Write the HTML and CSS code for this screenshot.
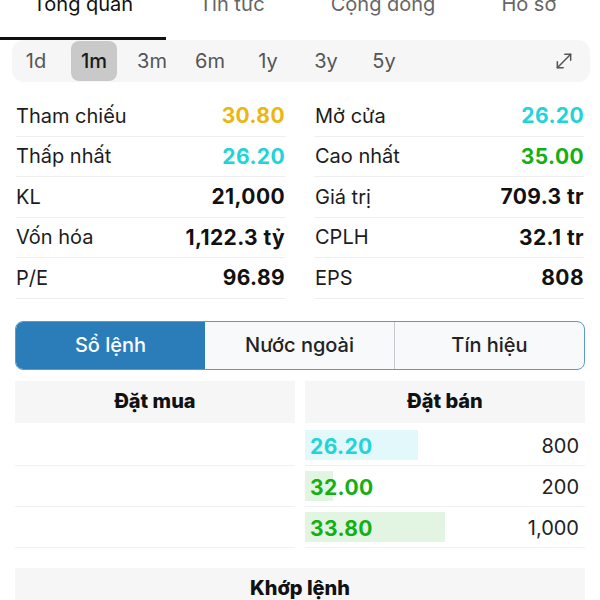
FILE: index.html
```html
<!DOCTYPE html>
<html>
	<head>
		<meta charset="UTF-8" />
		<title>Tổng quan</title>
		<link rel="stylesheet" href="styles.css">
	</head>
	<body>
		<nav class="tabs">
			<a class="tab active">Tổng quan</a>
			<a class="tab">Tin tức</a>
			<a class="tab">Cộng đồng</a>
			<a class="tab">Hồ sơ</a>
		</nav>
		<div class="periods">
			<button class="period">1d</button>
			<button class="period active">1m</button>
			<button class="period">3m</button>
			<button class="period">6m</button>
			<button class="period">1y</button>
			<button class="period">3y</button>
			<button class="period">5y</button>
			<button class="expand" aria-label="expand">
				<svg width="20" height="20" viewBox="0 0 24 24" fill="none" stroke="#555" stroke-width="1.8" stroke-linecap="round" stroke-linejoin="round">
					<line x1="4" y1="20" x2="20" y2="4" />
					<polyline points="13,4 20,4 20,11" />
					<polyline points="4,13 4,20 11,20" />
				</svg>
			</button>
		</div>
		<div class="stats">
			<div class="stat-col">
				<div class="stat"><span>Tham chiếu</span><b class="ref">30.80</b></div>
				<div class="stat"><span>Thấp nhất</span><b class="floor">26.20</b></div>
				<div class="stat"><span>KL</span><b>21,000</b></div>
				<div class="stat"><span>Vốn hóa</span><b>1,122.3 tỷ</b></div>
				<div class="stat"><span>P/E</span><b>96.89</b></div>
			</div>
			<div class="stat-col">
				<div class="stat"><span>Mở cửa</span><b class="floor">26.20</b></div>
				<div class="stat"><span>Cao nhất</span><b class="up">35.00</b></div>
				<div class="stat"><span>Giá trị</span><b>709.3 tr</b></div>
				<div class="stat"><span>CPLH</span><b>32.1 tr</b></div>
				<div class="stat"><span>EPS</span><b>808</b></div>
			</div>
		</div>
		<div class="segments">
			<button class="segment active">Sổ lệnh</button>
			<button class="segment">Nước ngoài</button>
			<button class="segment">Tín hiệu</button>
		</div>
		<div class="book">
			<div class="book-col">
				<div class="book-head">Đặt mua</div>
				<div class="book-row"></div>
				<div class="book-row"></div>
				<div class="book-row"></div>
			</div>
			<div class="book-col">
				<div class="book-head">Đặt bán</div>
				<div class="book-row">
					<span class="price floor"><i class="vol-bar floor-bg" style="width: 113px"></i>26.20</span>
					<span class="qty">800</span>
				</div>
				<div class="book-row">
					<span class="price up"><i class="vol-bar up-bg" style="width: 28px"></i>32.00</span>
					<span class="qty">200</span>
				</div>
				<div class="book-row">
					<span class="price up"><i class="vol-bar up-bg" style="width: 140px"></i>33.80</span>
					<span class="qty">1,000</span>
				</div>
			</div>
		</div>
		<div class="matched">Khớp lệnh</div>
	</body>
</html>
```
FILE: styles.css
```css
* {
	margin: 0;
	padding: 0;
	box-sizing: border-box;
}
body {
	font-family: Inter, "Noto Sans", sans-serif;
	font-size: 20px;
	color: #1c1c1e;
	background-color: #fff;
	overflow: hidden;
}
button {
	font-family: inherit;
	font-size: inherit;
	border: none;
	background: none;
	color: inherit;
}
.tabs {
	display: flex;
	margin-top: -8px;
}
.tab {
	padding: 0 33px 21px;
	line-height: 24px;
	color: #666;
	border-bottom: 3px solid transparent;
}
.tab.active {
	color: #111;
	border-bottom-color: #111;
}
.periods {
	display: flex;
	align-items: center;
	gap: 12px;
	height: 42px;
	margin: 0 10px 0 12px;
	padding: 1px 16px 1px 1px;
	background-color: #f6f6f6;
	border-radius: 12px;
}
.period {
	width: 46px;
	height: 40px;
	border-radius: 8px;
	color: #555;
}
.period.active {
	background-color: #c9c9c9;
	color: #1a1a1a;
	font-weight: 500;
}
.expand {
	margin-left: auto;
	display: flex;
}
.stats {
	display: flex;
	gap: 30px;
	padding: 0 16px;
	margin-top: 14px;
}
.stat-col {
	flex: 1;
}
.stat {
	display: flex;
	align-items: center;
	justify-content: space-between;
	height: 40.5px;
	border-bottom: 1px solid #eeeeee;
}
.stat b,
.price {
	font-size: 21px;
	font-weight: 700;
	letter-spacing: 0.4px;
	color: #111;
}
.ref {
	color: #ecb612 !important;
}
.floor {
	color: #22d3d9 !important;
}
.up {
	color: #13b013 !important;
}
.segments {
	display: flex;
	margin: 22px 15px 0;
	height: 49px;
	border: 1px solid #5a9bc9;
	border-radius: 8px;
	overflow: hidden;
	background-color: #f8f9fb;
}
.segment {
	flex: 1;
	font-weight: 500;
	color: #222;
}
.segment + .segment {
	border-left: 1px solid #c8ccd0;
}
.segment.active {
	background-color: #2b7db9;
	color: #fff;
}
.segment.active + .segment {
	border-left: none;
}
.book {
	display: flex;
	gap: 10px;
	margin: 11px 15px 0;
}
.book-col {
	flex: 1;
}
.book-head,
.matched {
	height: 42px;
	line-height: 40px;
	text-align: center;
	font-weight: 800;
	color: #111;
	background-color: #f6f6f6;
	margin-bottom: 2px;
}
.book-row {
	display: flex;
	align-items: center;
	justify-content: space-between;
	height: 41px;
	padding: 3px 6px 0 5px;
	border-bottom: 1px solid #f0f0f0;
}
.price {
	position: relative;
}
.vol-bar {
	position: absolute;
	left: -5px;
	top: -4px;
	height: 30px;
	z-index: -1;
}
.floor-bg {
	background-color: #e2f8fa;
}
.up-bg {
	background-color: #e2f5e2;
}
.qty {
	color: #222;
}
.matched {
	margin: 20px 15px 0;
}
```
